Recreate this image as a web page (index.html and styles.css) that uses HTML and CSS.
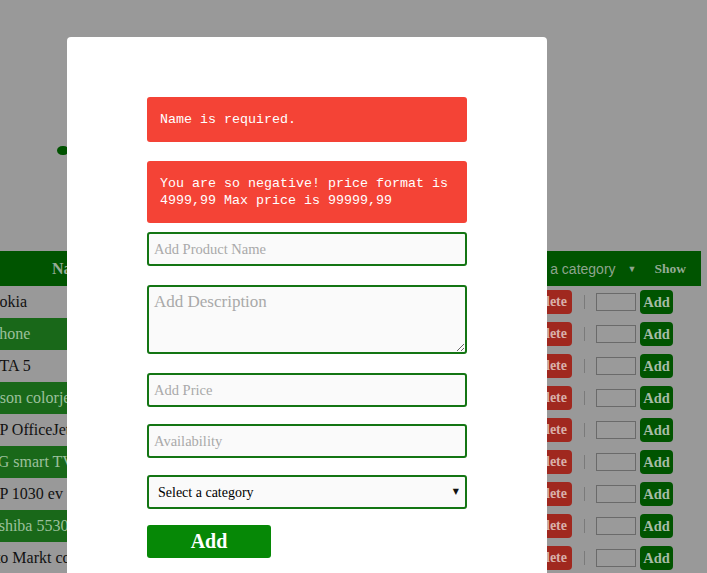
FILE: index.html
```html
<!DOCTYPE html>
<html>
<head>
<meta charset="utf-8">
<title>Products</title>
<link rel="stylesheet" href="styles.css">
</head>
<body>
<div class="page">
  <div class="hero"><span class="logo-dot"></span></div>
  <div class="table">
    <div class="row head">
      <div class="h-name">Name</div>
      <div class="fill"></div>
      <div class="h-filter"><span class="sel-text">Select a category</span><span class="sel-arrow">▼</span></div>
      <div class="h-show">Show</div>
    </div>
    <div class="row"><div class="c-name"><span>Nokia</span></div><div class="fill"></div><div class="del">Delete</div><div class="sep"></div><div class="qty"></div><div class="add">Add</div></div>
    <div class="row alt"><div class="c-name"><span class="s14">iPhone</span></div><div class="fill"></div><div class="del">Delete</div><div class="sep"></div><div class="qty"></div><div class="add">Add</div></div>
    <div class="row"><div class="c-name"><span>GTA 5</span></div><div class="fill"></div><div class="del">Delete</div><div class="sep"></div><div class="qty"></div><div class="add">Add</div></div>
    <div class="row alt"><div class="c-name"><span class="s18">Epson colorjet</span></div><div class="fill"></div><div class="del">Delete</div><div class="sep"></div><div class="qty"></div><div class="add">Add</div></div>
    <div class="row"><div class="c-name"><span>HP OfficeJet Pro</span></div><div class="fill"></div><div class="del">Delete</div><div class="sep"></div><div class="qty"></div><div class="add">Add</div></div>
    <div class="row alt"><div class="c-name"><span>LG smart TV</span></div><div class="fill"></div><div class="del">Delete</div><div class="sep"></div><div class="qty"></div><div class="add">Add</div></div>
    <div class="row"><div class="c-name"><span>HP 1030 ev</span></div><div class="fill"></div><div class="del">Delete</div><div class="sep"></div><div class="qty"></div><div class="add">Add</div></div>
    <div class="row alt"><div class="c-name"><span class="s18">Toshiba 5530</span></div><div class="fill"></div><div class="del">Delete</div><div class="sep"></div><div class="qty"></div><div class="add">Add</div></div>
    <div class="row"><div class="c-name"><span class="s21">Foto Markt co</span></div><div class="fill"></div><div class="del">Delete</div><div class="sep"></div><div class="qty"></div><div class="add">Add</div></div>
  </div>
</div>

<div class="modal">
  <div class="err err1">Name is required.</div>
  <div class="err err2">You are so negative! price format is 4999,99 Max price is 99999,99</div>
  <input class="field f-name" type="text" placeholder="Add Product Name">
  <textarea class="field f-desc" placeholder="Add Description"></textarea>
  <input class="field f-price" type="text" placeholder="Add Price">
  <input class="field f-avail" type="text" placeholder="Availability">
  <div class="select-wrap">
    <select class="field f-cat">
      <option>Select a category</option>
    </select>
  </div>
  <button class="submit" type="button">Add</button>
</div>
</body>
</html>
```

FILE: styles.css
```css
html, body {
  margin: 0;
  padding: 0;
}
body {
  background: #999999;
  width: 707px;
  height: 573px;
  overflow: hidden;
  position: relative;
  font-family: "Liberation Serif", "Times New Roman", serif;
}
.page {
  width: 707px;
}
.hero {
  height: 251px;
  padding-top: 146px;
  box-sizing: border-box;
  padding-left: 57px;
}
.logo-dot {
  display: block;
  width: 11px;
  height: 9px;
  background: #005200;
  border-radius: 55% 45% 45% 55%;
}
.table {
  width: 701px;
}
.row {
  display: flex;
  align-items: center;
  height: 32px;
}
.row.head {
  height: 35px;
  background: #005400;
  color: #95ab95;
  font-weight: bold;
}
.fill {
  flex: 1;
}
.h-name {
  width: 144px;
  text-align: center;
  font-size: 16px;
}
.h-filter {
  display: flex;
  align-items: center;
  font-family: "Liberation Sans", Arial, sans-serif;
  font-weight: normal;
  font-size: 14px;
  color: #8ea58e;
}
.sel-arrow {
  font-size: 9px;
  margin-left: 12px;
  margin-right: 18px;
}
.h-show {
  font-size: 13.5px;
  margin-right: 15px;
}
.c-name {
  width: 140px;
  height: 100%;
  display: flex;
  align-items: center;
  overflow: hidden;
  white-space: nowrap;
  font-size: 16px;
  color: #111111;
}
.c-name span {
  margin-left: -12px;
}
.c-name span.s14 {
  margin-left: -14px;
}
.c-name span.s18 {
  margin-left: -18px;
}
.c-name span.s21 {
  margin-left: -21px;
}
.row.alt .c-name {
  background: #196819;
  color: #9cc09c;
}
.del {
  height: 24px;
  line-height: 24px;
  padding: 0 5px;
  background: #a0281f;
  color: #d8b0aa;
  border-radius: 4px;
  font-weight: bold;
  font-size: 14px;
  margin-right: 12px;
}
.sep {
  width: 1px;
  height: 14px;
  background: #7a7a7a;
  margin-right: 11px;
}
.qty {
  width: 40px;
  height: 18px;
  box-sizing: border-box;
  border: 1px solid #6a6a6a;
  background: #9a9a9a;
  margin-right: 4px;
}
.add {
  width: 33px;
  height: 24px;
  line-height: 24px;
  text-align: center;
  background: #005400;
  color: #a6bca6;
  border-radius: 4px;
  font-weight: bold;
  font-size: 14.5px;
  margin-right: 28px;
}

.modal {
  position: absolute;
  top: 37px;
  left: 67px;
  width: 480px;
  height: 580px;
  box-sizing: border-box;
  background: #ffffff;
  border-radius: 4px;
  padding: 60px 80px;
}
.err {
  width: 320px;
  box-sizing: border-box;
  background: #f44336;
  color: #ffffff;
  border-radius: 3px;
  padding: 14px 13px 14px;
  font-family: "Liberation Mono", "Courier New", monospace;
  font-size: 13.33px;
  line-height: 17px;
}
.err1 {
  margin-bottom: 19px;
}
.err2 {
  margin-bottom: 9px;
}
.field {
  display: block;
  width: 320px;
  height: 34px;
  box-sizing: border-box;
  margin: 0;
  border: 2px solid #137513;
  border-radius: 3px;
  background: #fafafa;
  padding: 0 5px;
  font-family: "Liberation Serif", "Times New Roman", serif;
  font-size: 14.5px;
  color: #000;
  outline: none;
}
.field::placeholder {
  color: #a9a9a9;
}
.f-name {
  margin-bottom: 19px;
}
.f-desc {
  height: 69px;
  padding: 5px;
  font-size: 17px;
  margin-bottom: 19px;
  resize: vertical;
}
.f-price {
  margin-bottom: 17px;
}
.f-avail {
  margin-bottom: 17px;
}
.select-wrap {
  position: relative;
  width: 320px;
  margin-bottom: 16px;
}
.f-cat {
  appearance: none;
  -webkit-appearance: none;
  padding: 0 9px;
  font-size: 14px;
}
.select-wrap::after {
  content: "▼";
  position: absolute;
  right: 8px;
  top: 12px;
  font-size: 8px;
  color: #111;
  font-family: "DejaVu Sans", sans-serif;
  pointer-events: none;
}
.submit {
  display: block;
  width: 124px;
  height: 33px;
  border: none;
  border-radius: 3px;
  background: #068806;
  color: #ffffff;
  font-family: "Liberation Serif", "Times New Roman", serif;
  font-weight: bold;
  font-size: 20px;
  padding: 0;
}
```
